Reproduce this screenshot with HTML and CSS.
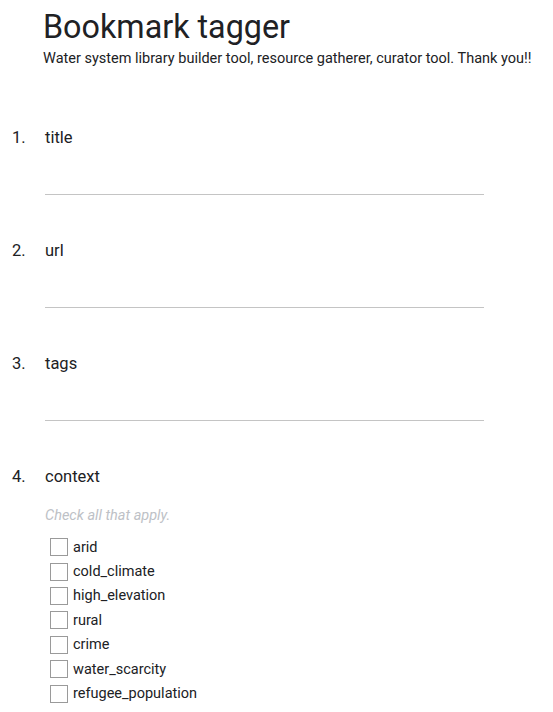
FILE: index.html
```
<!DOCTYPE html>
<html>
<head>
<meta charset="utf-8">
<link rel="stylesheet" href="styles.css">
</head>
<body>
<header class="head">
  <h1 class="title">Bookmark tagger</h1>
  <p class="desc">Water system library builder tool, resource gatherer, curator tool. Thank you!!</p>
</header>
<ol class="questions">
  <li class="q">
    <span class="num">1.</span>
    <div class="body">
      <div class="label">title</div>
      <div class="line"></div>
    </div>
  </li>
  <li class="q">
    <span class="num">2.</span>
    <div class="body">
      <div class="label">url</div>
      <div class="line"></div>
    </div>
  </li>
  <li class="q">
    <span class="num">3.</span>
    <div class="body">
      <div class="label">tags</div>
      <div class="line"></div>
    </div>
  </li>
  <li class="q last">
    <span class="num">4.</span>
    <div class="body">
      <div class="label">context</div>
      <div class="hint">Check all that apply.</div>
      <ul class="opts">
        <li class="opt"><span class="box"></span>arid</li>
        <li class="opt"><span class="box"></span>cold_climate</li>
        <li class="opt"><span class="box"></span>high_elevation</li>
        <li class="opt"><span class="box"></span>rural</li>
        <li class="opt"><span class="box"></span>crime</li>
        <li class="opt"><span class="box"></span>water_scarcity</li>
        <li class="opt"><span class="box"></span>refugee_population</li>
      </ul>
    </div>
  </li>
</ol>
</body>
</html>
```
FILE: styles.css
```
html, body {
  margin: 0;
  padding: 0;
  background: #fff;
  color: #202124;
  font-family: Roboto, "Liberation Sans", sans-serif;
}
.head {
  padding: 7px 0 0 43px;
}
.title {
  margin: 0;
  font-family: Roboto, sans-serif;
  font-weight: 400;
  font-size: 32.3px;
  line-height: 40px;
  color: #202124;
}
.desc {
  margin: 2px 0 0 0;
  font-size: 14.5px;
  line-height: 20px;
  color: #202124;
}
.questions {
  list-style: none;
  margin: 57px 0 0 0;
  padding: 0;
}
.q {
  display: flex;
  height: 113px;
}
.q.last {
  height: auto;
}
.num {
  width: 33px;
  padding-left: 12px;
  font-size: 16.5px;
  line-height: 24px;
}
.body {
  width: 439px;
}
.label {
  font-size: 16.5px;
  line-height: 24px;
}
.line {
  margin-top: 44px;
  height: 1px;
  background: #c4c4c4;
}
.hint {
  margin-top: 17px;
  font-size: 14.5px;
  line-height: 20px;
  font-style: italic;
  color: #bdc1c6;
}
.opts {
  list-style: none;
  margin: 9px 0 0 5px;
  padding: 0;
}
.opt {
  display: flex;
  align-items: center;
  height: 24.4px;
  font-size: 14.5px;
  color: #202124;
}
.box {
  box-sizing: border-box;
  width: 18px;
  height: 18px;
  border: 1px solid #9a9a9a;
  margin-right: 5px;
}
```
